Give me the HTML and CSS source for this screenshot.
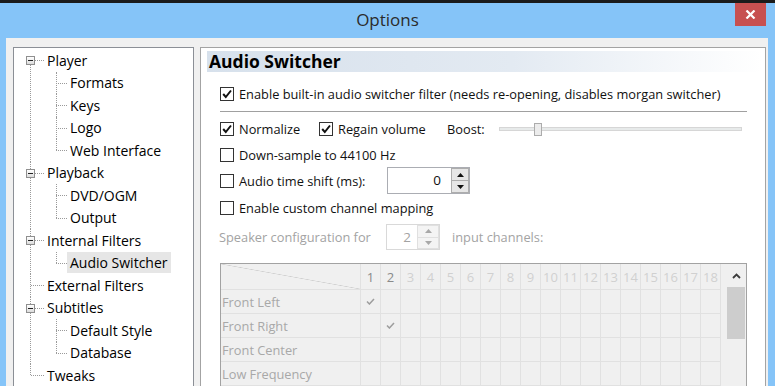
FILE: index.html
```html
<!doctype html>
<html>
<head>
<meta charset="UTF-8">
<title>Options</title>
<link rel="stylesheet" href="styles.css">
</head>
<body>
<div class="topstrip"></div>
<header class="titlebar">
	<span></span>
	<h1 class="title">Options</h1>
	<button class="close" type="button"><svg width="11" height="9" viewBox="0 0 11 9"><path d="M1.5 0.5 L9.5 8.5 M9.5 0.5 L1.5 8.5" stroke="#fff" stroke-width="2.2"/></svg></button>
</header>

<div class="window">

	<nav class="tree">
		<ul class="root">
			<li><div class="node"><span class="exp"></span>Player</div>
				<ul class="children">
					<li><div class="node">Formats</div></li>
					<li><div class="node">Keys</div></li>
					<li><div class="node">Logo</div></li>
					<li><div class="node">Web Interface</div></li>
				</ul>
			</li>
			<li><div class="node"><span class="exp"></span>Playback</div>
				<ul class="children">
					<li><div class="node">DVD/OGM</div></li>
					<li><div class="node">Output</div></li>
				</ul>
			</li>
			<li><div class="node"><span class="exp"></span>Internal Filters</div>
				<ul class="children">
					<li><div class="node"><span class="selected">Audio Switcher</span></div></li>
				</ul>
			</li>
			<li><div class="node">External Filters</div></li>
			<li><div class="node"><span class="exp"></span>Subtitles</div>
				<ul class="children">
					<li><div class="node">Default Style</div></li>
					<li><div class="node">Database</div></li>
				</ul>
			</li>
			<li><div class="node">Tweaks</div></li>
		</ul>
	</nav>

	<section class="panel">
		<h2 class="panel-head">Audio Switcher</h2>
		<div class="content">
			<div class="row row-enable">
				<label class="check"><span class="box"><svg width="12" height="12" viewBox="0 0 12 12"><path d="M2.2 6 L4.8 9 L10 2.5" fill="none" stroke="#111" stroke-width="2"/></svg></span>Enable built-in audio switcher filter (needs re-opening, disables morgan switcher)</label>
			</div>
			<hr class="sep">
			<div class="row row-norm">
				<label class="check w-norm"><span class="box"><svg width="12" height="12" viewBox="0 0 12 12"><path d="M2.2 6 L4.8 9 L10 2.5" fill="none" stroke="#111" stroke-width="2"/></svg></span>Normalize</label>
				<label class="check w-regain"><span class="box"><svg width="12" height="12" viewBox="0 0 12 12"><path d="M2.2 6 L4.8 9 L10 2.5" fill="none" stroke="#111" stroke-width="2"/></svg></span>Regain volume</label>
				<span class="w-boost">Boost:</span>
				<div class="slider"><span class="thumb"></span></div>
			</div>
			<div class="row row-down">
				<label class="check"><span class="box"></span>Down-sample to 44100 Hz</label>
			</div>
			<div class="row row-shift">
				<label class="check w-shift"><span class="box"></span>Audio time shift (ms):</label>
				<div class="spin">
					<span class="spin-field shift-field">0</span>
					<span class="spin-btns">
						<span class="spin-btn"><svg width="7" height="4" viewBox="0 0 7 4"><path d="M0 4 L3.5 0 L7 4 Z" fill="#111"/></svg></span>
						<span class="spin-btn"><svg width="7" height="4" viewBox="0 0 7 4"><path d="M0 0 L3.5 4 L7 0 Z" fill="#111"/></svg></span>
					</span>
				</div>
			</div>
			<div class="row row-custom">
				<label class="check"><span class="box"></span>Enable custom channel mapping</label>
			</div>
			<div class="row row-speaker disabled">
				<span class="w-speaker">Speaker configuration for</span>
				<div class="spin spin-small">
					<span class="spin-field speaker-field">2</span>
					<span class="spin-btns">
						<span class="spin-btn"><svg width="7" height="4" viewBox="0 0 7 4"><path d="M0 4 L3.5 0 L7 4 Z" fill="#a8a8a8"/></svg></span>
						<span class="spin-btn"><svg width="7" height="4" viewBox="0 0 7 4"><path d="M0 0 L3.5 4 L7 0 Z" fill="#a8a8a8"/></svg></span>
					</span>
				</div>
				<span class="after-spin">input channels:</span>
			</div>

			<div class="grid">
				<div class="matrix">
					<div class="corner"></div>
					<div class="n dark">1</div><div class="n dark">2</div><div class="n">3</div><div class="n">4</div><div class="n">5</div><div class="n">6</div><div class="n">7</div><div class="n">8</div><div class="n">9</div><div class="n">10</div><div class="n">11</div><div class="n">12</div><div class="n">13</div><div class="n">14</div><div class="n">15</div><div class="n">16</div><div class="n">17</div><div class="n">18</div>

					<div class="rl">Front Left</div>
					<div class="c"><svg width="9" height="7" viewBox="0 0 9 7"><path d="M1 3.5 L3.4 6 L8 1" fill="none" stroke="#9d9d9d" stroke-width="1.5"/></svg></div><div class="c"></div><div class="c"></div><div class="c"></div><div class="c"></div><div class="c"></div><div class="c"></div><div class="c"></div><div class="c"></div><div class="c"></div><div class="c"></div><div class="c"></div><div class="c"></div><div class="c"></div><div class="c"></div><div class="c"></div><div class="c"></div><div class="c"></div>

					<div class="rl">Front Right</div>
					<div class="c"></div><div class="c"><svg width="9" height="7" viewBox="0 0 9 7"><path d="M1 3.5 L3.4 6 L8 1" fill="none" stroke="#9d9d9d" stroke-width="1.5"/></svg></div><div class="c"></div><div class="c"></div><div class="c"></div><div class="c"></div><div class="c"></div><div class="c"></div><div class="c"></div><div class="c"></div><div class="c"></div><div class="c"></div><div class="c"></div><div class="c"></div><div class="c"></div><div class="c"></div><div class="c"></div><div class="c"></div>

					<div class="rl">Front Center</div>
					<div class="c"></div><div class="c"></div><div class="c"></div><div class="c"></div><div class="c"></div><div class="c"></div><div class="c"></div><div class="c"></div><div class="c"></div><div class="c"></div><div class="c"></div><div class="c"></div><div class="c"></div><div class="c"></div><div class="c"></div><div class="c"></div><div class="c"></div><div class="c"></div>

					<div class="rl">Low Frequency</div>
					<div class="c"></div><div class="c"></div><div class="c"></div><div class="c"></div><div class="c"></div><div class="c"></div><div class="c"></div><div class="c"></div><div class="c"></div><div class="c"></div><div class="c"></div><div class="c"></div><div class="c"></div><div class="c"></div><div class="c"></div><div class="c"></div><div class="c"></div><div class="c"></div>
				</div>
				<div class="vscroll">
					<div class="sb-up"><svg width="9" height="6" viewBox="0 0 9 6"><path d="M1 5 L4.5 1.5 L8 5" fill="none" stroke="#3c3c3c" stroke-width="1.8"/></svg></div>
					<div class="sb-thumb"></div>
				</div>
			</div>
		</div>
	</section>

</div>
</body>
</html>
```
FILE: styles.css
```css
body {
	margin: 0;
	height: 386px;
	overflow: hidden;
	background-color: #85c4f8;
	font-family: "Open Sans", "Noto Sans", sans-serif;
	font-size: 12.8px;
	color: #111;
}

.topstrip {
	height: 3px;
	background: #1b1b1b;
}

.titlebar {
	display: grid;
	grid-template-columns: 1fr auto 1fr;
	height: 35px;
}

.title {
	margin: 0;
	font-size: 17px;
	font-weight: normal;
	line-height: 34px;
	color: #2b2b2b;
}

.close {
	justify-self: end;
	width: 31px;
	height: 23px;
	margin-right: 9px;
	padding: 0;
	border: 0;
	background: #c75050;
	display: flex;
	align-items: center;
	justify-content: center;
}

.window {
	display: flex;
	align-items: flex-start;
	gap: 6px;
	margin: 0 7px 0 6px;
	padding: 9px 4px 0 7px;
	height: 348px;
	box-sizing: border-box;
	overflow: hidden;
	background: #f0f0f0;
}

/* tree on the left */
.tree {
	width: 181px;
	height: 400px;
	flex: none;
	box-sizing: border-box;
	border: 1px solid #8b8f96;
	background: #fff;
	font-size: 14px;
	color: #000;
	padding-top: 1px;
}

.tree ul {
	list-style: none;
	margin: 0;
	padding: 0;
}

.tree li {
	position: relative;
}

.node {
	position: relative;
	height: 22.5px;
	display: flex;
	align-items: center;
	padding-left: 33px;
	white-space: nowrap;
}

.node::before {
	content: "";
	position: absolute;
	left: 17px;
	width: 13px;
	top: 11px;
	border-top: 1px dotted #9a9a9a;
}

.children .node {
	padding-left: 56px;
}

.children .node::before {
	left: 42px;
	width: 11px;
}

.root > li::after,
.children > li::after {
	content: "";
	position: absolute;
	left: 16px;
	top: 0;
	bottom: 0;
	border-left: 1px dotted #9a9a9a;
}

.children > li::after {
	left: 42px;
}

.root > li:first-child::after {
	top: 11px;
}

.root > li:last-child::after,
.children > li:last-child::after {
	bottom: auto;
	height: 11px;
}

.exp {
	position: absolute;
	z-index: 1;
	left: 12px;
	top: 7px;
	width: 9px;
	height: 9px;
	box-sizing: border-box;
	border: 1px solid #8f8f8f;
	background: linear-gradient(#ffffff, #dcdcdc);
}

.exp::after {
	content: "";
	position: absolute;
	left: 1px;
	top: 3px;
	width: 5px;
	height: 1px;
	background: #222;
}

.selected {
	background: #e6e6e6;
	margin-left: -3px;
	padding: 0 3px;
	height: 21px;
	line-height: 21px;
}

/* right panel */
.panel {
	flex: 1;
	height: 400px;
	box-sizing: border-box;
	border: 1px solid #a3a3a3;
	background: #fff;
}

.panel-head {
	margin: 3px 3px 0 6px;
	height: 21px;
	padding-left: 2px;
	font-size: 17.5px;
	font-weight: 700;
	line-height: 21px;
	color: #000;
	background: linear-gradient(to right, #d7e1ec, #e3eaf2 55%, #ffffff);
}

.content {
	padding: 0 18px 0 19px;
}

.row {
	display: flex;
	align-items: center;
	height: 20px;
	white-space: nowrap;
}

.row-enable { margin-top: 12px; }
.row-norm { margin-top: 7px; }
.row-down { margin-top: 6px; }
.row-shift { margin-top: 2px; height: 27px; }
.row-custom { margin-top: 4px; }
.row-speaker { margin-top: 6px; height: 26px; }

.sep {
	margin: 7px 0 0;
	border: 0;
	height: 1px;
	background: #a0a0a0;
}

.check {
	display: flex;
	align-items: center;
}

.box {
	width: 14px;
	height: 14px;
	flex: none;
	box-sizing: border-box;
	border: 1px solid #333;
	background: #fff;
	margin-right: 5px;
	display: flex;
	align-items: center;
	justify-content: center;
}

.w-norm { width: 99px; }
.w-regain { width: 128px; }
.w-boost { width: 52px; }
.w-shift { width: 167px; }

.slider {
	position: relative;
	width: 243px;
	height: 4px;
	box-sizing: border-box;
	border: 1px solid #d6d6d6;
	background: #e7eaea;
}

.thumb {
	position: absolute;
	left: 34px;
	top: -5px;
	width: 8px;
	height: 13px;
	box-sizing: border-box;
	border: 1px solid #acacac;
	background: #ececec;
}

.spin {
	display: flex;
	width: 83px;
	height: 27px;
	box-sizing: border-box;
	border: 1px solid #abadb3;
	background: #fff;
}

.spin-field {
	flex: 1;
	text-align: right;
	line-height: 25px;
	font-size: 13.5px;
}

.shift-field { padding-right: 10px; }

.spin-btns {
	width: 18px;
	display: flex;
	flex-direction: column;
}

.spin-btn {
	flex: 1;
	display: flex;
	align-items: center;
	justify-content: center;
	border: 1px solid #adadad;
	background: #e6e6e6;
}

.spin-btn + .spin-btn {
	border-top: 0;
}

.disabled {
	color: #a3a3a3;
}

.w-speaker {
	width: 167px;
	margin-left: -1px;
}

.spin-small {
	width: 54px;
	height: 26px;
	border-color: #d9d9d9;
}

.spin-small .spin-btns {
	width: 22px;
}

.spin-small .spin-btn {
	border-color: #e0e0e0;
	background: #f4f4f4;
}

.speaker-field {
	padding-right: 6px;
	line-height: 24px;
}

.after-spin {
	margin-left: 12px;
}

/* channel matrix */
.grid {
	margin-top: 13px;
	display: flex;
	width: 527px;
	height: 160px;
	box-sizing: border-box;
	border: 1px solid #a2a2a2;
	background: #f0f0f0;
}

.matrix {
	display: grid;
	grid-template-columns: 140px repeat(18, 20px);
	grid-template-rows: 26px;
	grid-auto-rows: 24px;
}

.matrix > div {
	box-sizing: border-box;
	border-right: 1px solid #e1e1e1;
	border-bottom: 1px solid #e1e1e1;
	display: flex;
	align-items: center;
	justify-content: center;
}

.corner {
	background: linear-gradient(to top right, transparent calc(50% - 0.6px), #cfcfcf 50%, transparent calc(50% + 0.6px));
}

.n {
	color: #d0d0d0;
	font-size: 13px;
}

.n.dark {
	color: #8a8a8a;
}

.matrix > .rl {
	justify-content: flex-start;
	padding-left: 1px;
	color: #a8a8a8;
	white-space: nowrap;
}

.vscroll {
	width: 25px;
	box-sizing: border-box;
	padding: 0 1px 0 6px;
}

.sb-up {
	height: 23px;
	display: flex;
	align-items: center;
	justify-content: center;
}

.sb-thumb {
	height: 52px;
	background: #cdcdcd;
}
```
